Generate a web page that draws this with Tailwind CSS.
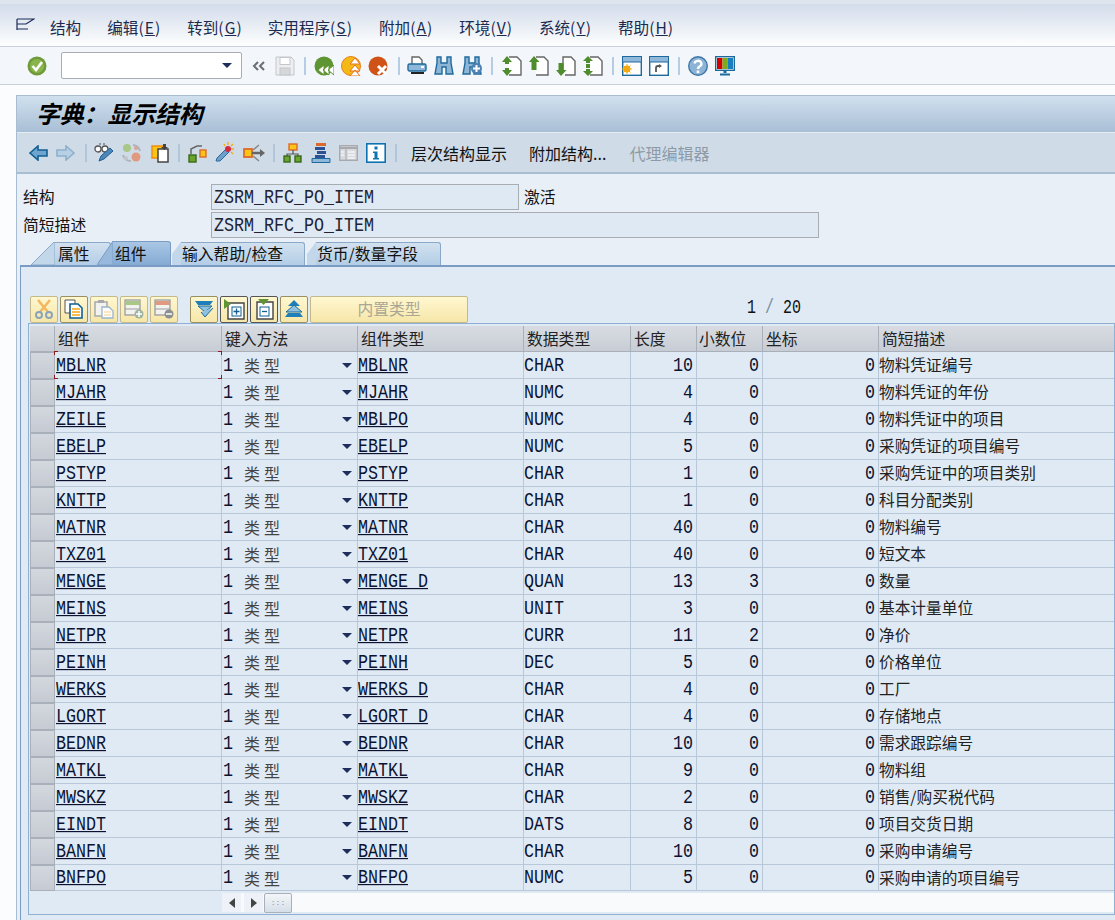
<!DOCTYPE html>
<html lang="en">
<head>
  <meta charset="UTF-8" />
  <title>字典：显示结构</title>
  <script src="https://cdn.jsdelivr.net/npm/@tailwindcss/browser@4"></script>
</head>
<body class="w-[1115px] h-[920px] overflow-hidden bg-[#fbfcfd] text-[#111] [font-family:'Liberation_Mono','Noto_Sans_CJK_SC',monospace]">

  <!-- Menu bar -->
  <div class="h-[47px] pt-[3px] bg-[#dfe5ee]">
    <div class="h-[43px] mt-px flex items-center bg-gradient-to-b from-[#d3dcea] to-[#fdfefe] border-b border-[#c9d0dc] text-[#1b2a4e] text-[15.6px] [font-family:'Noto_Sans_CJK_SC',sans-serif] pt-[6px]">
      <svg class="ml-[16px] mb-[7px]" width="19" height="14" viewBox="0 0 19 14" fill="none" stroke="#1b2a58" stroke-width="1.2"><path d="M1 1v11M1 1h17l-8 5H1M1 11h11"/></svg>
      <span class="ml-[15px]">结构</span>
      <span class="ml-[26px]">编辑<span class="tracking-[1px]">(<u>E</u>)</span></span>
      <span class="ml-[26px]">转到<span class="tracking-[1px]">(<u>G</u>)</span></span>
      <span class="ml-[25px]">实用程序<span class="tracking-[1px]">(<u>S</u>)</span></span>
      <span class="ml-[26px]">附加<span class="tracking-[1px]">(<u>A</u>)</span></span>
      <span class="ml-[26px]">环境<span class="tracking-[1px]">(<u>V</u>)</span></span>
      <span class="ml-[26px]">系统<span class="tracking-[1px]">(<u>Y</u>)</span></span>
      <span class="ml-[26px]">帮助<span class="tracking-[1px]">(<u>H</u>)</span></span>
    </div>
  </div>

  <!-- System toolbar -->
  <div class="h-[38px] bg-[#f3f6fa] border-b border-[#c9d0dc] flex items-center">
    <svg class="ml-[27px]" width="20" height="20" viewBox="0 0 20 20"><circle cx="10" cy="10" r="9.5" fill="#6f9a3a"/><circle cx="10" cy="10" r="7" fill="#8ab44c"/><path d="M5.5 10l3.5 4 6-8" fill="none" stroke="#fff" stroke-width="2.6"/></svg>
    <div class="ml-[14px] w-[181px] h-[27px] bg-white border border-[#a9adb3] rounded-[2px] flex items-center justify-end pr-[9px]">
      <div class="w-0 h-0 border-x-[5px] border-x-transparent border-t-[5px] border-t-[#1d2d5c]"></div>
    </div>
    <svg class="ml-[10px]" width="13" height="10" viewBox="0 0 13 10" fill="none" stroke="#6b6f75" stroke-width="2"><path d="M6 1L2 5l4 4M12 1L8 5l4 4"/></svg>
    <svg class="ml-[10px]" width="20" height="20" viewBox="0 0 20 20"><path d="M1 1h15l3 3v15H1z" fill="#eceef0" stroke="#c3c6ca"/><rect x="5" y="1.5" width="10" height="7" fill="#fff" stroke="#c3c6ca"/><rect x="5" y="12" width="10" height="7" fill="#d5d7da" stroke="#c3c6ca"/></svg>
    <div class="ml-[9px] w-[2px] h-[18px] bg-[#b5cde2]"></div>
    <svg class="ml-[8px]" width="20" height="20" viewBox="0 0 20 20"><circle cx="10" cy="10" r="9.5" fill="#5f9432"/><path d="M10 9l-6 5 6 5zM15 9l-6 5 6 5zM20 9l-6 5 6 5z" fill="#fff" stroke="#5f9432"/></svg>
    <svg class="ml-[7px]" width="20" height="20" viewBox="0 0 20 20"><circle cx="10" cy="10" r="9.5" fill="#f4b914" stroke="#e87f1e"/><path d="M14 2l-5 6h10zM14 9l-5 6h10zM14 14l-5 6h10z" fill="#fff" stroke="#e2741d"/></svg>
    <svg class="ml-[7px]" width="20" height="20" viewBox="0 0 20 20"><circle cx="10" cy="10" r="9.5" fill="#cf5316"/><path d="M10 10l8 8M18 10l-8 8" stroke="#fff" stroke-width="3"/></svg>
    <div class="ml-[10px] w-[2px] h-[18px] bg-[#b5cde2]"></div>
    <svg class="ml-[7px]" width="20" height="20" viewBox="0 0 20 20"><path d="M5 8V1h7l3 3v4" fill="#fff" stroke="#666" stroke-width="1.4"/><rect x="1" y="8" width="18" height="7" rx="1.5" fill="#8fb7d9" stroke="#1f6a9c" stroke-width="1.4"/><rect x="14" y="10" width="3" height="2" fill="#fff"/><rect x="4" y="16" width="13" height="2" fill="#222"/></svg>
    <svg class="ml-[7px]" width="20" height="20" viewBox="0 0 20 20" fill="#8fb5d6" stroke="#1f6a9c" stroke-width="1.4"><path d="M3 1h4v6h6V1h4v6l2 11h-7v-7H8v7H1L3 7z"/><path d="M8 9h4" stroke="#8fb5d6"/></svg>
    <svg class="ml-[8px]" width="20" height="20" viewBox="0 0 20 20"><path d="M3 1h4v6h6V1h4v6l2 11h-7v-7H8v7H1L3 7z" fill="#8fb5d6" stroke="#1f6a9c" stroke-width="1.4"/><circle cx="14.5" cy="12.5" r="5.5" fill="#4d82b5"/><path d="M14.5 9v7M11 12.5h7" stroke="#fff" stroke-width="2"/></svg>
    <div class="ml-[9px] w-[2px] h-[18px] bg-[#b5cde2]"></div>
    <svg class="ml-[9px]" width="20" height="20" viewBox="0 0 20 20"><path d="M7 1h8l4 4v14H7" fill="#fff" stroke="#666" stroke-width="1.4"/><path d="M5 0l5 6H7v2H3V6H0zM5 20l5-6H7v-2H3v2H0z" fill="#4f8c2d"/></svg>
    <svg class="ml-[7px]" width="20" height="20" viewBox="0 0 20 20"><path d="M7 1h8l4 4v14H7" fill="#fff" stroke="#666" stroke-width="1.4"/><path d="M5 0l5.500 6H7.500v8h-5V6H0z" fill="#4f8c2d"/></svg>
    <svg class="ml-[7px]" width="20" height="20" viewBox="0 0 20 20"><path d="M7 17V1h8l4 4v14H9" fill="#fff" stroke="#666" stroke-width="1.4"/><path d="M5 20l5.500-6H7.500V7h-5v7H0z" fill="#4f8c2d"/></svg>
    <svg class="ml-[7px]" width="20" height="20" viewBox="0 0 20 20"><path d="M7 1h8l4 4v14H7" fill="#fff" stroke="#666" stroke-width="1.4"/><path d="M5 0l5 5H7v2H3V5H0zM5 20l5-5H7v-2H3v2H0zM3 8h4v4H3z" fill="#4f8c2d"/></svg>
    <div class="ml-[9px] w-[2px] h-[18px] bg-[#b5cde2]"></div>
    <svg class="ml-[8px]" width="20" height="20" viewBox="0 0 20 20"><rect x="0.7" y="0.7" width="18.6" height="18.6" fill="#fff" stroke="#1f6a9c" stroke-width="1.4"/><rect x="1" y="1" width="18" height="5" fill="#8fb7d9"/><path d="M1 6h18" stroke="#1f6a9c"/><circle cx="5" cy="13" r="3.4" fill="#f6a811"/><path d="M5 8v10M0 13h10M1.5 9.5l7 7M8.500 9.500l-7 7" stroke="#f6a811"/></svg>
    <svg class="ml-[7px]" width="20" height="20" viewBox="0 0 20 20"><rect x="0.7" y="0.700" width="18.600" height="18.600" fill="#fff" stroke="#1f6a9c" stroke-width="1.400"/><rect x="1" y="1" width="18" height="5" fill="#8fb7d9"/><path d="M1 6h18" stroke="#1f6a9c"/><path d="M7 16v-4a2 2 0 0 1 2-2h2" fill="none" stroke="#555" stroke-width="1.800"/><path d="M10 8l3 2-3 2z" fill="#555"/></svg>
    <div class="ml-[9px] w-[2px] h-[18px] bg-[#b5cde2]"></div>
    <svg class="ml-[8px]" width="20" height="20" viewBox="0 0 20 20"><circle cx="10" cy="10" r="9.300" fill="#8db4d6" stroke="#3f78a8" stroke-width="1.400"/><path d="M6.500 7.500a3.500 3 0 1 1 5 3c-1 .7-1.500 1.200-1.500 2.500" fill="none" stroke="#fff" stroke-width="2.400"/><rect x="8.700" y="14.500" width="2.600" height="2.600" fill="#fff"/></svg>
    <svg class="ml-[7px]" width="20" height="20" viewBox="0 0 20 20"><rect x="0.700" y="0.700" width="18.600" height="13.600" fill="#fff" stroke="#1f6a9c" stroke-width="1.400"/><rect x="2" y="2" width="5.500" height="11" fill="#d40000"/><rect x="7.500" y="2" width="5" height="11" fill="#7cab1e"/><rect x="12.500" y="2" width="5.500" height="11" fill="#1a7fc1"/><path d="M8.500 15h3v2h-3zM5 17.500h10v2H5z" fill="#1f6a9c"/></svg>
  </div>

  <!-- Screen area -->
  <div class="pl-[16px] pt-[10px]">
    <div class="h-[825px] bg-[#e8eff7] border-t border-l border-[#a9bdd2] overflow-hidden">
      <div class="h-[37px] pb-[3px] bg-gradient-to-b from-[#d0e0ee] to-[#a9bfd6] border-b border-[#e4ecf4] flex items-center pl-[19px] text-[23.8px] font-bold italic [font-family:'Noto_Sans_CJK_SC',sans-serif] text-black">字典：显示结构</div>

      <!-- Application toolbar -->
      <div class="h-[41px] bg-[#cfdce8] border-b-2 border-[#a9bdd2] flex items-center text-[16px] [font-family:'Noto_Sans_CJK_SC',sans-serif]">
        <svg class="ml-[12px]" width="19" height="16" viewBox="0 0 19 16"><path d="M1 8l8-7v4h9v6H9v4z" fill="#6fa4cf" stroke="#0f5f93" stroke-width="1.600"/></svg>
        <svg class="ml-[8px]" width="19" height="16" viewBox="0 0 19 16"><path d="M18 8l-8-7v4H1v6h9v4z" fill="#b8d0e4" stroke="#8db0cd" stroke-width="1.600"/></svg>
        <div class="ml-[10px] w-[2px] h-[18px] bg-[#b0c6da]"></div>
        <svg class="ml-[7px]" width="21" height="20" viewBox="0 0 21 20"><circle cx="4" cy="6" r="3" fill="#fff" stroke="#555" stroke-width="1.300"/><circle cx="11" cy="6" r="3" fill="#fff" stroke="#555" stroke-width="1.300"/><path d="M5 1h2M9 1h2" stroke="#555"/><path d="M5 18l2-5 9-8 3 3-9 8z" fill="#4d86b9" stroke="#1f5f94"/></svg>
        <svg class="ml-[7px]" width="20" height="20" viewBox="0 0 20 20"><circle cx="5" cy="5" r="4" fill="#a9c786"/><circle cx="14" cy="14" r="4.500" fill="#e09a80"/><path d="M11 2a8 8 0 0 1 7 6M9 18a8 8 0 0 1-8-6" fill="none" stroke="#b0b4ba" stroke-width="2"/><circle cx="14" cy="5" r="2" fill="#d9a29a"/><circle cx="4" cy="15" r="2" fill="#c3c7cc"/></svg>
        <svg class="ml-[9px]" width="19" height="20" viewBox="0 0 19 20"><rect x="1" y="3" width="12" height="12" fill="#fbc515" stroke="#ef8f0c" stroke-width="1.500"/><rect x="7" y="6" width="10" height="13" fill="#fff" stroke="#444" stroke-width="1.500"/><path d="M12 1h3v3h2l-3.500 3L10 4h2z" fill="#444"/></svg>
        <div class="ml-[8px] w-[2px] h-[18px] bg-[#b0c6da]"></div>
        <svg class="ml-[8px]" width="19" height="20" viewBox="0 0 19 20"><rect x="1" y="12" width="7" height="7" fill="#6da32c" stroke="#35691b" stroke-width="1.400"/><rect x="12" y="7" width="6" height="7" fill="#fbc515" stroke="#dd6a2a" stroke-width="1.400"/><path d="M3 11V6l6-3h5" fill="none" stroke="#666" stroke-width="1.500"/></svg>
        <svg class="ml-[8px]" width="21" height="21" viewBox="0 0 21 21"><path d="M1 19l1-3 9-9 3 3-9 9z" fill="#6ea0cb" stroke="#2d6b9e"/><circle cx="13" cy="7" r="3" fill="#d9263a"/><path d="M13 0v3M19 7h-3M18 2l-2 2M9 2l1 2M18 12l-2-2" stroke="#f6a811" stroke-width="1.300"/></svg>
        <svg class="ml-[7px]" width="22" height="20" viewBox="0 0 22 20"><rect x="1" y="6" width="8" height="8" fill="#fbc515" stroke="#dd6a2a" stroke-width="1.800"/><path d="M9 10h9" stroke="#666" stroke-width="2.500"/><path d="M17 6l5 4-5 4z" fill="#666"/><path d="M10 7l6-5M10 13l6 5" stroke="#888" stroke-width="1.500"/></svg>
        <div class="ml-[8px] w-[2px] h-[18px] bg-[#b0c6da]"></div>
        <svg class="ml-[8px]" width="19" height="20" viewBox="0 0 19 20" fill="none"><rect x="6" y="1" width="8" height="6" fill="#fbc515" stroke="#dd6a2a" stroke-width="1.400"/><path d="M10 7v4M4 14v-3h11v3" stroke="#555" stroke-width="1.200"/><rect x="1" y="13" width="6" height="6" fill="#6da32c" stroke="#35691b" stroke-width="1.400"/><rect x="12" y="13" width="6" height="6" fill="#6da32c" stroke="#35691b" stroke-width="1.400"/></svg>
        <svg class="ml-[9px]" width="20" height="20" viewBox="0 0 20 20"><rect x="5" y="0" width="10" height="3" fill="#dd6a2a"/><rect x="4" y="4" width="10" height="3" fill="#2d5294"/><rect x="6" y="8" width="9" height="3" fill="#2d5294"/><rect x="4" y="12" width="10" height="3" fill="#2d5294"/><path d="M1 15.500h18v4H1z" fill="#8fb7d9" stroke="#1f6a9c"/></svg>
        <svg class="ml-[8px]" width="19" height="16" viewBox="0 0 19 16"><rect x="0.700" y="0.700" width="17.600" height="14.600" fill="#d7dbe0" stroke="#a7a9ac" stroke-width="1.400"/><path d="M1 3h17" stroke="#a7a9ac" stroke-width="2"/><path d="M7 3v12" stroke="#a7a9ac"/><path d="M2 7h3M2 10h3M9 7h7M9 10h7M9 13h7" stroke="#fff"/></svg>
        <svg class="ml-[8px]" width="20" height="20" viewBox="0 0 20 20"><rect x="0.800" y="0.800" width="18.400" height="18.400" fill="#fff" stroke="#0f72b3" stroke-width="1.600"/><rect x="8.500" y="3.500" width="3" height="3" fill="#0f72b3"/><path d="M7 8.500h4.500v6.500H13v1.500H7V15h1.500V10H7z" fill="#0f72b3"/></svg>
        <div class="ml-[9px] w-[2px] h-[18px] bg-[#b0c6da]"></div>
        <span class="ml-[14px]">层次结构显示</span>
        <span class="ml-[22px]">附加结构...</span>
        <span class="ml-[23px] text-[#8e9aa6]">代理编辑器</span>
      </div>

      <!-- Header fields -->
      <div class="pl-[6px] pt-[10px] text-[15.8px]">
        <div class="flex items-center h-[26px] [font-family:'Noto_Sans_CJK_SC',sans-serif]">
          <span class="w-[188px]">结构</span>
          <div class="w-[308px] h-[26px] flex items-center pl-[2px] bg-[#dfe9f3] border border-[#a8adb2] text-[16.67px] [font-family:'Liberation_Mono',monospace] text-[#223]"><span class="inline-block scale-y-[1.18]">ZSRM_RFC_PO_ITEM</span></div>
          <span class="ml-[5px]">激活</span>
        </div>
        <div class="flex items-center h-[26px] mt-[2px] [font-family:'Noto_Sans_CJK_SC',sans-serif]">
          <span class="w-[188px]">简短描述</span>
          <div class="w-[608px] h-[26px] flex items-center pl-[2px] bg-[#dfe9f3] border border-[#a8adb2] text-[16.67px] [font-family:'Liberation_Mono',monospace] text-[#223]"><span class="inline-block scale-y-[1.18]">ZSRM_RFC_PO_ITEM</span></div>
        </div>
      </div>

      <!-- Tabs -->
      <div class="ml-[4px] mt-[3px] h-[24px] flex items-end text-[15.8px] [font-family:'Noto_Sans_CJK_SC',sans-serif]">
        <div class="relative ml-[34px] w-[56px] h-[23px] pl-[3px] bg-gradient-to-b from-[#d2e1ef] to-[#b3cde6] border-t border-r border-[#8aa8c8] rounded-tr-[3px] flex items-center">属性
          <svg class="absolute -left-[24px] -top-px" width="24" height="23" viewBox="0 0 24 23"><path d="M0 23L23 0h1v23z" fill="#c3d7ea" stroke="#8aa8c8"/></svg>
        </div>
        <div class="relative ml-[2px] w-[58px] h-[24px] pl-[2px] bg-gradient-to-b from-[#a9c6e4] to-[#85abd4] border-t border-r border-[#7a9cc4] rounded-tr-[3px] flex items-center z-10">组件
          <svg class="absolute -left-[16px] -top-px" width="16" height="24" viewBox="0 0 16 24"><path d="M0 24L16 0v24z" fill="#98b9dc" stroke="#7a9cc4"/></svg>
        </div>
        <div class="relative ml-[10px] w-[124px] h-[23px] pl-[1px] bg-gradient-to-b from-[#d2e1ef] to-[#b3cde6] border-t border-r border-[#8aa8c8] rounded-tr-[3px] flex items-center">输入帮助/检查
          <svg class="absolute -left-[9px] -top-px" width="9" height="23" viewBox="0 0 9 23"><path d="M0 23V12L9 0v23z" fill="#c3d7ea"/></svg>
        </div>
        <div class="relative ml-[11px] w-[125px] h-[23px] pl-[1px] bg-gradient-to-b from-[#d2e1ef] to-[#b3cde6] border-t border-r border-[#8aa8c8] rounded-tr-[3px] flex items-center">货币/数量字段
          <svg class="absolute -left-[9px] -top-px" width="9" height="23" viewBox="0 0 9 23"><path d="M0 23V12L9 0v23z" fill="#c3d7ea"/></svg>
        </div>
      </div>

      <!-- Tab panel -->
      <div class="ml-[3px] h-[700px] bg-[#dfeaf5] border-t-2 border-l border-[#7a9cc4] pt-[28px] pl-[7px]">
        <!-- Table toolbar -->
        <div class="flex items-center h-[28px] pl-[2px]">
          <div class="flex gap-[2px]">
            <button class="w-[28px] h-[27px] flex items-center justify-center bg-gradient-to-b from-[#fff7d0] to-[#f6e6a8] border border-[#c4b98a] rounded-[2px]"><svg width="20" height="20" viewBox="0 0 20 20" fill="none"><path d="M4 1l10 12M16 1L6 13" stroke="#f2b860" stroke-width="2.500"/><circle cx="5" cy="16" r="3" stroke="#8aa5bb" stroke-width="2"/><circle cx="15" cy="16" r="3" stroke="#8aa5bb" stroke-width="2"/></svg></button>
            <button class="w-[28px] h-[27px] flex items-center justify-center bg-gradient-to-b from-[#fff7d0] to-[#f6e6a8] border border-[#9a8f60] rounded-[2px]"><svg width="20" height="20" viewBox="0 0 20 20"><path d="M1 1h10v13H1z" fill="#fff" stroke="#555"/><path d="M6 5h8l4 4v10H6z" fill="#fff" stroke="#0f5f93" stroke-width="1.600"/><path d="M8 10h8M8 13h8M8 16h8" stroke="#f6a811" stroke-width="1.500"/></svg></button>
            <button class="w-[28px] h-[27px] flex items-center justify-center bg-gradient-to-b from-[#fff7d0] to-[#f6e6a8] border border-[#c4b98a] rounded-[2px]"><svg width="20" height="20" viewBox="0 0 20 20"><path d="M1 3h12v14H1z" fill="#f2f2ee" stroke="#a7a9ac" stroke-width="1.500"/><rect x="4" y="1" width="6" height="3" fill="#a7a9ac"/><path d="M8 8h7l4 4v7H8z" fill="#fff" stroke="#9bb5ca" stroke-width="1.300"/><path d="M10 13h7M10 16h7" stroke="#f5cf7e"/></svg></button>
            <button class="w-[28px] h-[27px] flex items-center justify-center bg-gradient-to-b from-[#fff7d0] to-[#f6e6a8] border border-[#c4b98a] rounded-[2px]"><svg width="20" height="20" viewBox="0 0 20 20"><rect x="1" y="1" width="15" height="15" fill="#f2f2ee" stroke="#9a9c9f" stroke-width="1.300"/><rect x="1" y="2" width="15" height="4" fill="#a9c786"/><path d="M1 10h15" stroke="#9a9c9f"/><circle cx="15" cy="15" r="4.500" fill="#9fb4a0"/><path d="M15 12v6M12 15h6" stroke="#fff" stroke-width="1.500"/></svg></button>
            <button class="w-[28px] h-[27px] flex items-center justify-center bg-gradient-to-b from-[#fff7d0] to-[#f6e6a8] border border-[#c4b98a] rounded-[2px]"><svg width="20" height="20" viewBox="0 0 20 20"><rect x="1" y="1" width="15" height="15" fill="#f2f2ee" stroke="#9a9c9f" stroke-width="1.300"/><rect x="1" y="2" width="15" height="4" fill="#e09a80"/><path d="M1 10h15" stroke="#9a9c9f"/><circle cx="15" cy="15" r="4.500" fill="#8d8f92"/><path d="M12 15h6" stroke="#fff" stroke-width="1.500"/></svg></button>
          </div>
          <div class="ml-[12px] flex gap-[2px]">
            <button class="w-[28px] h-[27px] flex items-center justify-center bg-gradient-to-b from-[#fff7d0] to-[#f6e6a8] border border-[#9a8f60] rounded-[2px]"><svg width="20" height="18" viewBox="0 0 20 18"><path d="M1 1h18l-3 4H4z" fill="#1f7fb8"/><path d="M4 6h14l-7 6z" fill="#8fc1e0" stroke="#1f6a9c"/><path d="M19 8l-8 9-4-5" fill="#8fc1e0" stroke="#1f6a9c"/></svg></button>
            <button class="w-[28px] h-[27px] flex items-center justify-center bg-gradient-to-b from-[#fff7d0] to-[#f6e6a8] border border-[#555] rounded-[2px]"><svg width="21" height="21" viewBox="0 0 21 21"><path d="M4 4h16v16H4z" fill="#fff" stroke="#444" stroke-width="1.400"/><path d="M0 0l7 5-7 5z" fill="#5f9432"/><rect x="8" y="8" width="9" height="9" fill="none" stroke="#0f5f93"/><path d="M12.500 9.500v6M9.500 12.500h6" stroke="#0f5f93" stroke-width="1.300"/></svg></button>
            <button class="w-[28px] h-[27px] flex items-center justify-center bg-gradient-to-b from-[#fff7d0] to-[#f6e6a8] border border-[#555] rounded-[2px]"><svg width="21" height="21" viewBox="0 0 21 21"><path d="M3 3h16v17H3z" fill="#fff" stroke="#444" stroke-width="1.400"/><path d="M4 0h11l-5.500 6z" fill="#5f9432"/><rect x="6" y="8" width="9" height="9" fill="none" stroke="#0f5f93"/><path d="M8 12.500h5" stroke="#0f5f93" stroke-width="1.300"/></svg></button>
            <button class="w-[28px] h-[27px] flex items-center justify-center bg-gradient-to-b from-[#fff7d0] to-[#f6e6a8] border border-[#9a8f60] rounded-[2px]"><svg width="20" height="18" viewBox="0 0 20 18"><path d="M10 0l6 6H4z" fill="#1f7fb8"/><path d="M10 5l8 7H2z" fill="#8fc1e0" stroke="#1f6a9c"/><path d="M1 17l3-4h12l3 4z" fill="#1f7fb8"/></svg></button>
          </div>
          <button class="ml-[2px] w-[158px] h-[27px] bg-gradient-to-b from-[#fff7d0] to-[#f6e6a8] border border-[#c4b98a] rounded-[2px] text-[#a9a696] text-[15.8px] [font-family:'Noto_Sans_CJK_SC',sans-serif]">内置类型</button>
          <span class="ml-[279px] inline-block scale-y-[1.3] text-[15px]">1 <span class="text-[#7d8b99]">/</span> 20</span>
        </div>

        <!-- Table -->
        <div class="h-[592px] border border-[#8fb0d0] pt-[2px] pl-px">
          <div class="grid grid-cols-[25px_167px_136px_166px_107px_66px_66px_116px_1fr] h-[26px] text-[15.800px] text-[#222] [font-family:'Noto_Sans_CJK_SC',sans-serif]">
            <div class="bg-gradient-to-b from-[#d8dce2] to-[#c8cdd5] border-r border-b border-[#a9b0b9]"></div>
            <div class="pl-[3px] flex items-center bg-gradient-to-b from-[#d8dce2] to-[#c8cdd5] border-r border-b border-[#a9b0b9]">组件</div>
            <div class="pl-[3px] flex items-center bg-gradient-to-b from-[#d8dce2] to-[#c8cdd5] border-r border-b border-[#a9b0b9]">键入方法</div>
            <div class="pl-[3px] flex items-center bg-gradient-to-b from-[#d8dce2] to-[#c8cdd5] border-r border-b border-[#a9b0b9]">组件类型</div>
            <div class="pl-[3px] flex items-center bg-gradient-to-b from-[#d8dce2] to-[#c8cdd5] border-r border-b border-[#a9b0b9]">数据类型</div>
            <div class="pl-[3px] flex items-center bg-gradient-to-b from-[#d8dce2] to-[#c8cdd5] border-r border-b border-[#a9b0b9]">长度</div>
            <div class="pl-[2px] flex items-center bg-gradient-to-b from-[#d8dce2] to-[#c8cdd5] border-r border-b border-[#a9b0b9]">小数位</div>
            <div class="pl-[3px] flex items-center bg-gradient-to-b from-[#d8dce2] to-[#c8cdd5] border-r border-b border-[#a9b0b9]">坐标</div>
            <div class="pl-[3px] flex items-center bg-gradient-to-b from-[#d8dce2] to-[#c8cdd5] border-b border-[#a9b0b9]">简短描述</div>
          </div>
          <div id="rows"></div>
          <!-- Scrollbar -->
          <div class="ml-[192px] mt-[2px] h-[19px] bg-[#f9fafc] flex items-center">
            <div class="w-[19px] h-[19px] bg-[#eef2f8] flex items-center justify-center"><div class="w-0 h-0 border-y-[5px] border-y-transparent border-r-[6px] border-r-[#444]"></div></div>
            <div class="ml-[3px] w-[19px] h-[19px] bg-[#eef2f8] flex items-center justify-center"><div class="w-0 h-0 border-y-[5px] border-y-transparent border-l-[6px] border-l-[#444]"></div></div>
            <div class="ml-[1px] w-[28px] h-[20px] bg-gradient-to-b from-[#f3f6f9] to-[#d5dee8] border border-[#a9b0b9] rounded-[2px] flex items-center justify-center text-[#8a929b] text-[8px] leading-none">:::</div>
          </div>
        </div>
      </div>
    </div>
  </div>

  <script>
    const rows = [
      ["MBLNR","MBLNR","CHAR",10,0,"物料凭证编号"],
      ["MJAHR","MJAHR","NUMC",4,0,"物料凭证的年份"],
      ["ZEILE","MBLPO","NUMC",4,0,"物料凭证中的项目"],
      ["EBELP","EBELP","NUMC",5,0,"采购凭证的项目编号"],
      ["PSTYP","PSTYP","CHAR",1,0,"采购凭证中的项目类别"],
      ["KNTTP","KNTTP","CHAR",1,0,"科目分配类别"],
      ["MATNR","MATNR","CHAR",40,0,"物料编号"],
      ["TXZ01","TXZ01","CHAR",40,0,"短文本"],
      ["MENGE","MENGE_D","QUAN",13,3,"数量"],
      ["MEINS","MEINS","UNIT",3,0,"基本计量单位"],
      ["NETPR","NETPR","CURR",11,2,"净价"],
      ["PEINH","PEINH","DEC",5,0,"价格单位"],
      ["WERKS","WERKS_D","CHAR",4,0,"工厂"],
      ["LGORT","LGORT_D","CHAR",4,0,"存储地点"],
      ["BEDNR","BEDNR","CHAR",10,0,"需求跟踪编号"],
      ["MATKL","MATKL","CHAR",9,0,"物料组"],
      ["MWSKZ","MWSKZ","CHAR",2,0,"销售/购买税代码"],
      ["EINDT","EINDT","DATS",8,0,"项目交货日期"],
      ["BANFN","BANFN","CHAR",10,0,"采购申请编号"],
      ["BNFPO","BNFPO","NUMC",5,0,"采购申请的项目编号"]
    ];

    const cell = "border-r border-b border-[#b9c8d8] flex items-center";
    const tall = "inline-block scale-y-[1.18]";

    document.getElementById("rows").innerHTML = rows.map((r, i) => `
      <div class="grid grid-cols-[25px_167px_136px_166px_107px_66px_66px_116px_1fr] ${i === 19 ? "h-[26px]" : "h-[27px]"} text-[16.67px] text-[#0c1230]">
        <div class="bg-gradient-to-b from-[#d3d7de] to-[#c6cbd3] border border-[#a9b0b9]"></div>
        <div class="relative pl-px ${cell}"><u class="${tall}">${r[0]}</u>${i === 0 ? `
          <span class="absolute -left-px -top-px w-[4px] h-[4px] border-l border-t border-[#8c1c1c]"></span>
          <span class="absolute -right-px -top-px w-[4px] h-[4px] border-r border-t border-[#8c1c1c]"></span>
          <span class="absolute -left-px -bottom-px w-[4px] h-[4px] border-l border-b border-[#8c1c1c]"></span>
          <span class="absolute -right-px -bottom-px w-[4px] h-[4px] border-r border-b border-[#8c1c1c]"></span>` : ""}</div>
        <div class="pl-px ${cell}"><span class="${tall}">1</span><span class="ml-[11px] text-[#444] text-[16px] tracking-[4px] [font-family:'Noto_Sans_CJK_SC',sans-serif]">类型</span><span class="ml-auto mr-[5px] w-0 h-0 border-x-[5px] border-x-transparent border-t-[5px] border-t-[#1d2d5c]"></span></div>
        <div class="${cell}"><u class="${tall}">${r[1]}</u></div>
        <div class="${cell}"><span class="${tall}">${r[2]}</span></div>
        <div class="justify-end pr-[3px] ${cell}"><span class="${tall}">${r[3]}</span></div>
        <div class="justify-end pr-[3px] ${cell}"><span class="${tall}">${r[4]}</span></div>
        <div class="justify-end pr-[3px] ${cell}"><span class="${tall}">0</span></div>
        <div class="border-b border-[#b9c8d8] flex items-center text-[15.700px] whitespace-nowrap [font-family:'Noto_Sans_CJK_SC',sans-serif] text-[#222]">${r[5]}</div>
      </div>`).join("");
  </script>
</body>
</html>
